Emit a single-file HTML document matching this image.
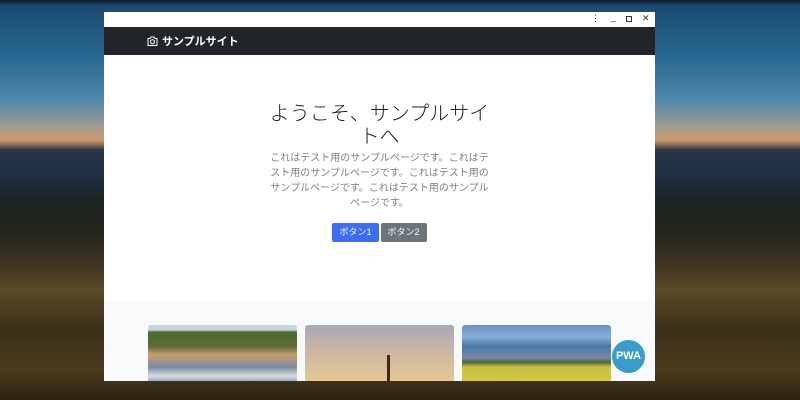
<!DOCTYPE html>
<html><head><meta charset="utf-8"><style>
*{margin:0;padding:0;box-sizing:border-box}
body{width:800px;height:400px;overflow:hidden;position:relative;font-family:"Liberation Sans","Noto Sans CJK JP",sans-serif;
background:linear-gradient(180deg,#0c1a2c 0,#1a4a70 6px,#2a6a92 60px,#4f87a8 100px,#9a9a94 125px,#d09a68 140px,#2a3648 150px,#1d2c40 180px,#1d2424 200px,#23251c 230px,#3a3220 260px,#5a4a26 290px,#3a3018 330px,#4a3a1c 370px,#2a2412 400px);}
.win{position:absolute;left:104px;top:12px;width:551px;height:369px;background:#fff;overflow:hidden}
.tb{height:15px;background:#fff;position:relative;font-size:9px;color:#333}
.nav{height:28px;background:#212529;color:#fff;font-size:11px;font-weight:bold;display:flex;align-items:center;padding-left:43px}
.nav svg{margin-right:4px}
h1{position:absolute;top:91px;left:0;width:551px;font-weight:300;font-size:20px;line-height:23px;color:#222;text-align:center}
p{position:absolute;top:139px;left:0;width:551px;font-size:10px;line-height:15px;color:#7a7f85;text-align:center;white-space:nowrap}
.btns{position:absolute;top:211px;left:0;width:551px;text-align:center;font-size:0}
.b{display:inline-block;height:19px;line-height:19px;font-size:9px;color:#fff;border-radius:2px;padding:0 7px;margin:0 1px}
.gray{position:absolute;left:0;top:289px;width:100%;height:80px;background:#f8f9fa}
.c{position:absolute;top:313px;width:149px;height:60px;border-radius:3px 3px 0 0;overflow:hidden}
</style></head><body>
<div class="win">
<div class="tb"><span style="position:absolute;left:487px;top:1px;font-size:9px">⋮</span><span style="position:absolute;left:507px;top:0">_</span><span style="position:absolute;left:522px;top:4px;width:6px;height:6px;border:1px solid #333"></span><span style="position:absolute;left:538px;top:1px">✕</span></div>
<div class="nav"><svg width="11" height="10" viewBox="0 0 11 10"><path d="M1 2.5h2l1-1.5h3l1 1.5h2v7H1z" fill="none" stroke="#fff" stroke-width="1"/><circle cx="5.5" cy="5.8" r="2" fill="none" stroke="#fff"/></svg>サンプルサイト</div>
<h1>ようこそ、サンプルサイ<br>トへ</h1>
<p>これはテスト用のサンプルページです。これはテ<br>スト用のサンプルページです。これはテスト用の<br>サンプルページです。これはテスト用のサンプル<br>ページです。</p>
<div class="btns"><span class="b" style="background:#3d6df2">ボタン1</span><span class="b" style="background:#6c737b">ボタン2</span></div>
<div class="gray"></div>
<div class="c" style="left:44px;background:linear-gradient(180deg,#c8d4e0 0,#c8d4e0 8%,#4c6a30 12%,#5a6a38 35%,#c8a070 50%,#7a8aa0 70%,#d8dce0 85%,#6a88a8 100%)"></div>
<div class="c" style="left:201px;background:linear-gradient(180deg,#a8a8b4 0,#d0b8a0 50%,#e8c890 100%)"><div style="position:absolute;left:82px;top:30px;width:3px;height:30px;background:#3a2a20"></div></div>
<div class="c" style="left:358px;background:linear-gradient(180deg,#6e90c8 0,#8aaad8 20%,#4a78a8 35%,#7a8aa0 55%,#4a6a40 62%,#c8c040 70%,#d8c848 100%)"></div>
<div style="position:absolute;left:508px;top:328px;width:33px;height:33px;border-radius:50%;background:#3a9cc8;color:#fff;font-size:11px;font-weight:bold;text-align:center;line-height:33px">PWA</div>
</div>
</body></html>
